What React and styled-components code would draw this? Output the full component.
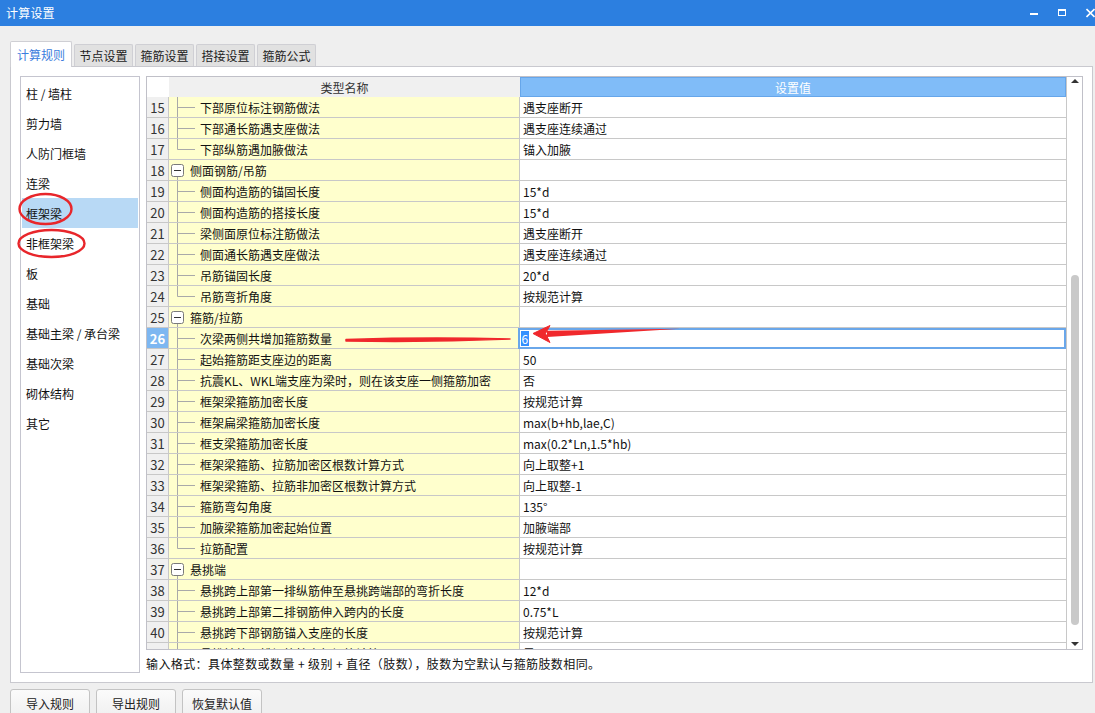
import React from 'react';
import styled, { createGlobalStyle, css } from 'styled-components';

const GlobalStyle = createGlobalStyle`
  html, body { margin: 0; padding: 0; background: #efefef; }
  body {
    font-family: "Noto Sans CJK SC", "Noto Sans", sans-serif;
    font-size: 12px;
    color: #000;
  }
  * { box-sizing: border-box; }
`;

const FONT = `"Noto Sans CJK SC", "Noto Sans", sans-serif`;

const Window = styled.div`
  position: relative;
  width: 1095px;
  height: 713px;
  overflow: hidden;
  background: #efefef;
  display: flex;
  flex-direction: column;
  font-family: ${FONT};
`;

const TitleBar = styled.div`
  flex: none;
  height: 26px;
  background: #2c7fe0;
  color: #fff;
  display: flex;
  align-items: center;
  padding: 0 0 0 6px;
  font-size: 12px;
`;

const TitleText = styled.span`
  line-height: 1;
  letter-spacing: 0.2px;
`;

const WinControls = styled.div`
  margin-left: auto;
  display: flex;
  align-items: center;
  gap: 20px;
  height: 100%;
`;

const Body = styled.div`
  padding: 15px 0 0 10px;
  display: flex;
  flex-direction: column;
`;

const TabStrip = styled.div`
  display: flex;
  align-items: flex-end;
  gap: 2px;
  height: 25px;
  position: relative;
  z-index: 1;
`;

const Tab = styled.div`
  flex: none;
  display: flex;
  align-items: center;
  justify-content: center;
  font-size: 12px;
  border: 1px solid #cfcfd4;
  border-bottom: none;
  border-radius: 2px 2px 0 0;
  ${(p) =>
    p.$active
      ? css`
          width: 62px;
          height: 26px;
          margin-bottom: -1px;
          background: #fff;
          color: #3b7ddd;
        `
      : css`
          width: 59px;
          height: 22px;
          background: #e1e1e1;
          color: #222;
        `}
`;

const Panel = styled.div`
  width: 1083px;
  height: 617px;
  border: 1px solid #c9c9cf;
  background: #fff;
  padding: 9px;
  display: flex;
  gap: 6px;
`;

const SideList = styled.div`
  flex: none;
  width: 120px;
  border: 1px solid #c5c5cf;
  padding: 1px;
  display: flex;
  flex-direction: column;
`;

const ListItem = styled.div`
  height: 30px;
  padding-left: 4px;
  display: flex;
  align-items: center;
  font-size: 12px;
  color: #111;
  background: ${(p) => (p.$selected ? '#b8d9f5' : 'transparent')};
`;

const RightCol = styled.div`
  width: 937px;
  display: flex;
  flex-direction: column;
`;

const Grid = styled.div`
  height: 574px;
  border: 1px solid #c0c0c8;
  display: flex;
`;

const TableArea = styled.div`
  flex: 1;
  display: flex;
  flex-direction: column;
  overflow: hidden;
`;

const HeaderRow = styled.div`
  flex: none;
  height: 20px;
  display: flex;
`;

const HeadNum = styled.div`
  width: 22px;
  background: #fff;
`;

const HeadName = styled.div`
  width: 351px;
  background: #f0f0f0;
  display: flex;
  align-items: center;
  justify-content: center;
  color: #333;
  font-size: 12px;
`;

const HeadValue = styled.div`
  flex: 1;
  background: #80bcf8;
  border: 1px solid #66a6ea;
  display: flex;
  align-items: center;
  justify-content: center;
  color: #fff;
  font-size: 12px;
`;

const Rows = styled.div`
  flex: 1;
  overflow: hidden;
`;

const Row = styled.div`
  height: 21px;
  display: flex;
  border-bottom: 1px solid #c8c8c8;
`;

const NumCell = styled.div`
  width: 22px;
  flex: none;
  display: flex;
  align-items: center;
  justify-content: center;
  border-right: 1px solid #c8c8c8;
  font-size: 13px;
  ${(p) =>
    p.$active
      ? css`
          background: #7db7f1;
          color: #fff;
          font-weight: 700;
        `
      : css`
          background: #f0f0f0;
          color: #333;
        `}
`;

const NameCell = styled.div`
  width: 351px;
  flex: none;
  display: flex;
  align-items: center;
  background: #ffffcd;
  border-right: 1px solid #c8c8c8;
  font-size: 12px;
  color: #111;
  white-space: nowrap;
`;

const ValueCell = styled.div`
  flex: 1;
  display: flex;
  align-items: center;
  padding-left: 3px;
  font-size: 12px;
  color: #111;
  white-space: nowrap;
  ${(p) =>
    p.$editing &&
    css`
      margin-left: -2px;
      padding-left: 3px;
      box-shadow: inset 0 0 0 2px #6aa7ea;
      margin-bottom: -1px;
      position: relative;
    `}
`;

const Selected = styled.span`
  background: #3390ff;
  color: #fff;
  padding: 0 0.5px;
  line-height: 15px;
`;

const Scrollbar = styled.div`
  flex: none;
  width: 16px;
  border-left: 1px solid #c8c8c8;
  background: #fff;
  display: flex;
  flex-direction: column;
  align-items: center;
`;

const ArrowUp = styled.div`
  margin-top: 2px;
  width: 0;
  height: 0;
  border-left: 4px solid transparent;
  border-right: 4px solid transparent;
  border-bottom: 4px solid #333;
`;

const ArrowDown = styled.div`
  margin-top: auto;
  margin-bottom: 3px;
  width: 0;
  height: 0;
  border-left: 4px solid transparent;
  border-right: 4px solid transparent;
  border-top: 4px solid #333;
`;

const Thumb = styled.div`
  margin-top: 192px;
  width: 8px;
  height: 350px;
  border-radius: 4px;
  background: #c9c9c9;
`;

const Help = styled.div`
  padding-top: 5px;
  line-height: 17px;
  font-size: 12px;
  letter-spacing: 0.4px;
  color: #111;
  white-space: pre;
`;

const ButtonRow = styled.div`
  margin-top: 6px;
  display: flex;
  gap: 6px;
`;

const Button = styled.div`
  width: 80px;
  height: 28px;
  border: 1px solid #c3c3c3;
  border-radius: 3px;
  background: linear-gradient(#fbfbfb, #f0f0f0);
  display: flex;
  align-items: center;
  justify-content: center;
  font-size: 12px;
  color: #222;
`;

const Overlay = styled.svg`
  position: absolute;
  left: 0;
  top: 0;
  pointer-events: none;
`;

const LINE = '#a9a9a9';

function Connector({ last }) {
  return (
    <svg width="31" height="20" style={{ flex: 'none' }}>
      <line x1="8.5" y1="0" x2="8.5" y2={last ? 10.5 : 21} stroke={LINE} strokeWidth="1" />
      <line x1="8.5" y1="10.5" x2="26" y2="10.5" stroke={LINE} strokeWidth="1" />
    </svg>
  );
}

function GroupBox() {
  return (
    <svg width="21" height="20" style={{ flex: 'none' }}>
      <line x1="8.5" y1="16" x2="8.5" y2="21" stroke={LINE} strokeWidth="1" />
      <rect x="2.5" y="4.5" width="12" height="12" rx="2" fill="#fff" stroke="#7a7a7a" strokeWidth="1" />
      <line x1="5" y1="10.5" x2="12" y2="10.5" stroke="#333" strokeWidth="1" />
    </svg>
  );
}

const rows = [
  [15, 'c', '下部原位标注钢筋做法', '遇支座断开'],
  [16, 'c', '下部通长筋遇支座做法', '遇支座连续通过'],
  [17, 'l', '下部纵筋遇加腋做法', '锚入加腋'],
  [18, 'g', '侧面钢筋/吊筋', ''],
  [19, 'c', '侧面构造筋的锚固长度', '15*d'],
  [20, 'c', '侧面构造筋的搭接长度', '15*d'],
  [21, 'c', '梁侧面原位标注筋做法', '遇支座断开'],
  [22, 'c', '侧面通长筋遇支座做法', '遇支座连续通过'],
  [23, 'c', '吊筋锚固长度', '20*d'],
  [24, 'l', '吊筋弯折角度', '按规范计算'],
  [25, 'g', '箍筋/拉筋', ''],
  [26, 'c', '次梁两侧共增加箍筋数量', '6'],
  [27, 'c', '起始箍筋距支座边的距离', '50'],
  [28, 'c', '抗震KL、WKL端支座为梁时，则在该支座一侧箍筋加密', '否'],
  [29, 'c', '框架梁箍筋加密长度', '按规范计算'],
  [30, 'c', '框架扁梁箍筋加密长度', 'max(b+hb,lae,C)'],
  [31, 'c', '框支梁箍筋加密长度', 'max(0.2*Ln,1.5*hb)'],
  [32, 'c', '框架梁箍筋、拉筋加密区根数计算方式', '向上取整+1'],
  [33, 'c', '框架梁箍筋、拉筋非加密区根数计算方式', '向上取整-1'],
  [34, 'c', '箍筋弯勾角度', '135°'],
  [35, 'c', '加腋梁箍筋加密起始位置', '加腋端部'],
  [36, 'l', '拉筋配置', '按规范计算'],
  [37, 'g', '悬挑端', ''],
  [38, 'c', '悬挑跨上部第一排纵筋伸至悬挑跨端部的弯折长度', '12*d'],
  [39, 'c', '悬挑跨上部第二排钢筋伸入跨内的长度', '0.75*L'],
  [40, 'c', '悬挑跨下部钢筋锚入支座的长度', '按规范计算'],
  [41, 'c', '悬挑端第二排钢筋按弯起钢筋计算', '是'],
];

const sideItems = [
  '柱 / 墙柱',
  '剪力墙',
  '人防门框墙',
  '连梁',
  '框架梁',
  '非框架梁',
  '板',
  '基础',
  '基础主梁 / 承台梁',
  '基础次梁',
  '砌体结构',
  '其它',
];

const tabs = ['计算规则', '节点设置', '箍筋设置', '搭接设置', '箍筋公式'];

export default function App() {
  return (
    <>
      <GlobalStyle />
      <Window>
        <TitleBar>
          <TitleText>计算设置</TitleText>
          <WinControls>
            <svg width="8" height="26">
              <rect x="0" y="13" width="8" height="2" fill="#fff" />
            </svg>
            <svg width="8" height="26">
              <rect x="0.5" y="9.5" width="7" height="6" fill="none" stroke="#fff" strokeWidth="1" />
              <rect x="0" y="9" width="8" height="2" fill="#fff" />
            </svg>
            <svg width="9" height="26">
              <path d="M0.5 9 L8.5 17 M8.5 9 L0.5 17" stroke="#fff" strokeWidth="1.6" />
            </svg>
          </WinControls>
        </TitleBar>
        <Body>
          <TabStrip>
            {tabs.map((t, i) => (
              <Tab key={t} $active={i === 0}>
                {t}
              </Tab>
            ))}
          </TabStrip>
          <Panel>
            <SideList>
              {sideItems.map((s) => (
                <ListItem key={s} $selected={s === '框架梁'}>
                  {s}
                </ListItem>
              ))}
            </SideList>
            <RightCol>
              <Grid>
                <TableArea>
                  <HeaderRow>
                    <HeadNum />
                    <HeadName>类型名称</HeadName>
                    <HeadValue>设置值</HeadValue>
                  </HeaderRow>
                  <Rows>
                    {rows.map(([n, kind, name, value]) => {
                      const editing = n === 26;
                      return (
                        <Row key={n}>
                          <NumCell $active={editing}>{n}</NumCell>
                          <NameCell>
                            {kind === 'g' ? <GroupBox /> : <Connector last={kind === 'l'} />}
                            {name}
                          </NameCell>
                          <ValueCell $editing={editing}>
                            {editing ? <Selected>{value}</Selected> : value}
                          </ValueCell>
                        </Row>
                      );
                    })}
                  </Rows>
                </TableArea>
                <Scrollbar>
                  <ArrowUp />
                  <Thumb />
                  <ArrowDown />
                </Scrollbar>
              </Grid>
              <Help>输入格式：具体整数或数量 + 级别 + 直径（肢数），肢数为空默认与箍筋肢数相同。</Help>
            </RightCol>
          </Panel>
          <ButtonRow>
            <Button>导入规则</Button>
            <Button>导出规则</Button>
            <Button>恢复默认值</Button>
          </ButtonRow>
        </Body>
        <Overlay width="1095" height="713" viewBox="0 0 1095 713">
          <ellipse cx="45.5" cy="209" rx="26" ry="15" fill="none" stroke="#e8262b" strokeWidth="2.4" />
          <ellipse cx="51.5" cy="243.5" rx="33" ry="13.5" fill="none" stroke="#e8262b" strokeWidth="2.4" />
          <path d="M346 339.5 Q428 337 510 339 Q428 342.5 346 341 Z" fill="#f0282c" stroke="#f0282c" strokeWidth="1.5" strokeLinejoin="round" />
          <path d="M680 328.8 L547 330.8 L547 337 Z" fill="#f0282c" />
          <path d="M533 333.5 L550 325.5 L545.5 333.5 L550 342.5 Z" fill="#f0282c" stroke="#f0282c" strokeWidth="1" strokeLinejoin="round" />
        </Overlay>
      </Window>
    </>
  );
}
